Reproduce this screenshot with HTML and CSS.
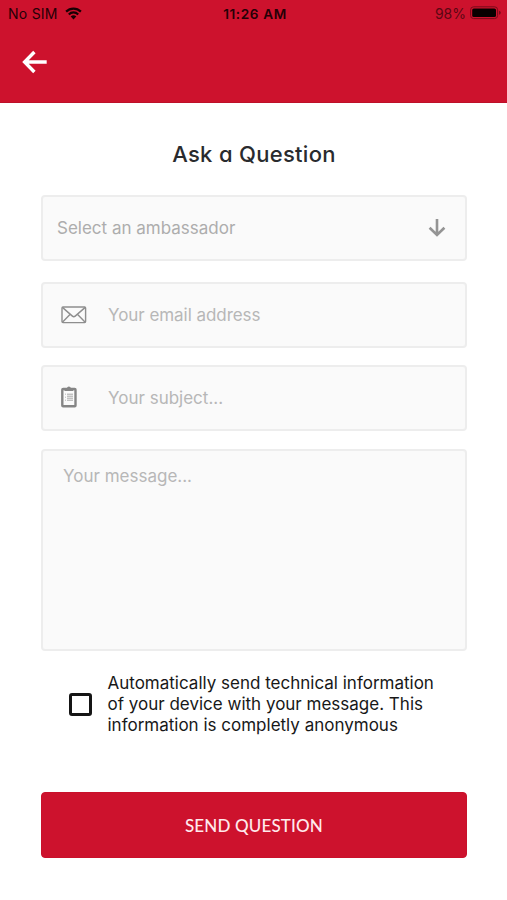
FILE: index.html
```html
<!DOCTYPE html>
<html lang="en">
<head>
<meta charset="utf-8">
<meta name="viewport" content="width=device-width, initial-scale=1">
<title>Ask a Question</title>
<link rel="stylesheet" href="styles.css">
</head>
<body>
<header class="header">
  <div class="status">
    <div class="carrier"><span class="sim">No SIM</span>
      <svg class="wifi" width="17" height="13" viewBox="0 0 17 13"><g fill="none" stroke="currentColor" stroke-width="2.2"><path d="M1.1 4.6a10.5 10.5 0 0 1 14.8 0"/><path d="M3.8 7.4a6.6 6.6 0 0 1 9.4 0"/></g><path d="M5.7 9.6a4 4 0 0 1 5.6 0L8.5 12.4z" fill="currentColor"/></svg>
    </div>
    <span class="time">11:26 AM</span>
    <div class="power"><span class="percent">98%</span>
      <svg class="battery" width="32" height="14" viewBox="0 0 32 14"><rect x=".6" y=".8" width="27" height="11.8" rx="3" fill="none" stroke="#790b1a"/><rect x="2.2" y="2.4" width="23.8" height="8.6" rx="1.6" fill="#080000"/><path d="M29 4.8q1.8.5 1.8 2t-1.8 2z" fill="#790b1a"/></svg>
    </div>
  </div>
  <a class="back" aria-label="Back"><svg width="26" height="24" viewBox="0 0 26 24"><path d="M24.7 12H3.5M12.4 2 2.6 12l9.8 10" fill="none" stroke="#fff" stroke-width="3.4"/></svg></a>
</header>
<main class="content">
  <h1 class="title"><span class="title-text">Ask a Question</span></h1>
  <form class="form">
    <div class="field select"><span class="label select-label">Select an ambassador</span>
      <svg width="18" height="20" viewBox="0 0 18 20"><path d="M9 1v16M1.6 9.7 9 17l7.4-7.3" fill="none" stroke="#949494" stroke-width="2.6"/></svg>
    </div>
    <div class="field email"><span class="icon"><svg width="26" height="18" viewBox="0 0 26 18"><g fill="none" stroke="#8e8e8e" stroke-width="1.4" stroke-linejoin="round"><rect x="1" y="1" width="23.6" height="15.6" rx="1"/><path d="m1.4 1.4 10 8.7q1.4 1.2 2.8 0l10-8.7M1.4 16.2l7.8-8M24.2 16.2l-7.8-8"/></g></svg></span><span class="label email-label">Your email address</span></div>
    <div class="field subject"><span class="icon clip"><svg width="16" height="22" viewBox="0 0 16 22"><rect x="1.3" y="3" width="13.2" height="17.2" rx=".8" fill="#fafafa" stroke="#858585" stroke-width="2.4"/><path d="M3.5 2.2h2.4Q6.2.5 7.9.5t2 1.7h2.4v2.9H3.5z" fill="#858585"/><path d="M6 8.2h6M6 10.2h6M6 12.2h6M6 14.2h6" stroke="#a7a7a7"/><path d="M4 8.2h1M4 11.2h1M4 14.2h1" stroke="#b5b5b5"/></svg></span><span class="label subject-label">Your subject...</span></div>
    <div class="field message"><span class="label message-label">Your message...</span></div>
    <div class="consent"><span class="checkbox" role="checkbox" aria-checked="false"></span>
      <p class="consent-text"><span class="line1">Automatically send technical information</span><br><span class="line2">of your device with your message. This</span><br><span class="line3">information is completly anonymous</span></p>
    </div>
    <button class="submit" type="button"><span class="submit-text">SEND QUESTION</span></button>
  </form>
</main>
</body>
</html>
```
FILE: styles.css
```css
* { box-sizing: border-box; }
body { margin: 0; min-height: 900px; background: #fff; color: #181818; font-family: Inter, "Liberation Sans", sans-serif; }
.header { height: 103px; background: #cd122d; border-bottom: 1px solid #bd1029; }
.status { height: 28px; padding: 0 5px 0 8px; display: grid; grid-template-columns: 1fr auto 1fr; align-items: center; color: #250006; font-size: 14px; line-height: 28px; white-space: nowrap; }
.carrier, .power { display: flex; align-items: center; }
.carrier { gap: 7px; }
.sim { letter-spacing: .25px; }
.wifi { position: relative; top: -1px; color: #180003; }
.power { justify-content: flex-end; gap: 4px; color: #5b0713; }
.battery { position: relative; top: -1px; }
.time { font-weight: 600; letter-spacing: .6px; }
.time { font-size: 13.6px; }
.back { display: block; width: 26px; height: 24px; margin: 22px 0 0 22px; }
.back svg, .field svg, .status svg { display: block; }
.content { padding: 35px 40px 0 41px; }
.title { margin: 0; height: 32px; line-height: 32px; text-align: center; color: #292b2e; font-size: 22px; font-weight: 500; letter-spacing: .3px; font-feature-settings: "cv11"; }
.form { display: flex; flex-direction: column; padding-top: 25px; }
.field { height: 66px; border: 2px solid #ededed; border-radius: 4px; background: #fafafa; display: flex; align-items: center; color: #b7b7b7; font-size: 17px; line-height: 22px; }
.label { white-space: nowrap; }
.select { justify-content: space-between; padding: 0 19px 0 14px; color: #adadad; }
.email { margin-top: 21px; padding-left: 18px; }
.email-label { letter-spacing: -.05px; }
.subject { margin-top: 17px; padding-left: 18px; }
.icon { width: 47px; }
.clip { padding-bottom: 3px; }
.message { margin-top: 18px; height: 202px; align-items: flex-start; padding: 14px 20px; }
.consent { display: flex; align-items: center; margin-top: 22px; padding-left: 28px; gap: 15.5px; height: 63px; }
.checkbox { flex: none; width: 23px; height: 23px; border: 3px solid #151515; border-radius: 3px; }
.consent-text { margin: 0; font-size: 17px; line-height: 21px; white-space: nowrap; }
.submit { margin-top: 56px; height: 66px; border: 1px solid #c9112b; border-radius: 4px; background: #cd122d; color: #ffe9ec; font-family: Lato, sans-serif; font-size: 17px; font-weight: 500; letter-spacing: .15px; }
```
